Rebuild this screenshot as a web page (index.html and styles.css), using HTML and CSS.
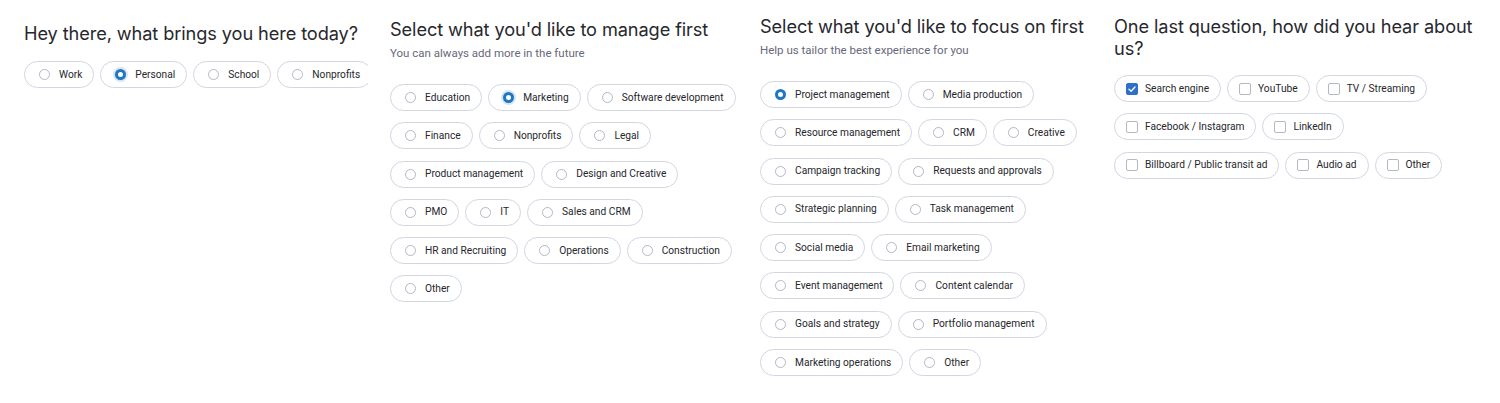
FILE: index.html
```html
<!DOCTYPE html>
<html>
<head>
<meta charset="utf-8">
<link rel="stylesheet" href="styles.css">
</head>
<body>
<div class="board">
  <section class="panel p1">
    <h2 class="title">Hey there, what brings you here today?</h2>
    <div class="rows">
      <div class="row nowrap">
        <div class="chip"><span class="radio"></span><span class="label">Work</span></div>
        <div class="chip"><span class="radio on halo"></span><span class="label">Personal</span></div>
        <div class="chip"><span class="radio"></span><span class="label">School</span></div>
        <div class="chip"><span class="radio"></span><span class="label">Nonprofits</span></div>
      </div>
    </div>
  </section>

  <section class="panel p2">
    <h2 class="title">Select what you'd like to manage first</h2>
    <p class="sub">You can always add more in the future</p>
    <div class="rows">
      <div class="row">
        <div class="chip"><span class="radio"></span><span class="label">Education</span></div>
        <div class="chip"><span class="radio on halo"></span><span class="label">Marketing</span></div>
        <div class="chip"><span class="radio"></span><span class="label">Software development</span></div>
      </div>
      <div class="row">
        <div class="chip"><span class="radio"></span><span class="label">Finance</span></div>
        <div class="chip"><span class="radio"></span><span class="label">Nonprofits</span></div>
        <div class="chip"><span class="radio"></span><span class="label">Legal</span></div>
      </div>
      <div class="row">
        <div class="chip"><span class="radio"></span><span class="label">Product management</span></div>
        <div class="chip"><span class="radio"></span><span class="label">Design and Creative</span></div>
      </div>
      <div class="row">
        <div class="chip"><span class="radio"></span><span class="label">PMO</span></div>
        <div class="chip"><span class="radio"></span><span class="label">IT</span></div>
        <div class="chip"><span class="radio"></span><span class="label">Sales and CRM</span></div>
      </div>
      <div class="row">
        <div class="chip"><span class="radio"></span><span class="label">HR and Recruiting</span></div>
        <div class="chip"><span class="radio"></span><span class="label">Operations</span></div>
        <div class="chip"><span class="radio"></span><span class="label">Construction</span></div>
      </div>
      <div class="row">
        <div class="chip"><span class="radio"></span><span class="label">Other</span></div>
      </div>
    </div>
  </section>

  <section class="panel p3">
    <h2 class="title">Select what you'd like to focus on first</h2>
    <p class="sub">Help us tailor the best experience for you</p>
    <div class="rows">
      <div class="row">
        <div class="chip"><span class="radio on"></span><span class="label">Project management</span></div>
        <div class="chip"><span class="radio"></span><span class="label">Media production</span></div>
      </div>
      <div class="row">
        <div class="chip"><span class="radio"></span><span class="label">Resource management</span></div>
        <div class="chip"><span class="radio"></span><span class="label">CRM</span></div>
        <div class="chip"><span class="radio"></span><span class="label">Creative</span></div>
      </div>
      <div class="row">
        <div class="chip"><span class="radio"></span><span class="label">Campaign tracking</span></div>
        <div class="chip"><span class="radio"></span><span class="label">Requests and approvals</span></div>
      </div>
      <div class="row">
        <div class="chip"><span class="radio"></span><span class="label">Strategic planning</span></div>
        <div class="chip"><span class="radio"></span><span class="label">Task management</span></div>
      </div>
      <div class="row">
        <div class="chip"><span class="radio"></span><span class="label">Social media</span></div>
        <div class="chip"><span class="radio"></span><span class="label">Email marketing</span></div>
      </div>
      <div class="row">
        <div class="chip"><span class="radio"></span><span class="label">Event management</span></div>
        <div class="chip"><span class="radio"></span><span class="label">Content calendar</span></div>
      </div>
      <div class="row">
        <div class="chip"><span class="radio"></span><span class="label">Goals and strategy</span></div>
        <div class="chip"><span class="radio"></span><span class="label">Portfolio management</span></div>
      </div>
      <div class="row">
        <div class="chip"><span class="radio"></span><span class="label">Marketing operations</span></div>
        <div class="chip"><span class="radio"></span><span class="label">Other</span></div>
      </div>
    </div>
  </section>

  <section class="panel p4">
    <h2 class="title wrap">One last question, how did you hear about us?</h2>
    <div class="rows">
      <div class="row">
        <div class="chip box"><span class="check on"><svg viewBox="0 0 12 12" width="12" height="12"><path d="M3 6.2 L5.1 8.2 L9 4" fill="none" stroke="#fff" stroke-width="1.3" stroke-linecap="round" stroke-linejoin="round"/></svg></span><span class="label">Search engine</span></div>
        <div class="chip box"><span class="check"></span><span class="label">YouTube</span></div>
        <div class="chip box"><span class="check"></span><span class="label">TV / Streaming</span></div>
      </div>
      <div class="row">
        <div class="chip box"><span class="check"></span><span class="label">Facebook / Instagram</span></div>
        <div class="chip box"><span class="check"></span><span class="label">LinkedIn</span></div>
      </div>
      <div class="row">
        <div class="chip box"><span class="check"></span><span class="label">Billboard / Public transit ad</span></div>
        <div class="chip box"><span class="check"></span><span class="label">Audio ad</span></div>
        <div class="chip box"><span class="check"></span><span class="label">Other</span></div>
      </div>
    </div>
  </section>
</div>
</body>
</html>
```

FILE: styles.css
```css
* { box-sizing: border-box; }
html, body { margin: 0; padding: 0; background: #ffffff; }
body {
  width: 1500px;
  height: 403px;
  overflow: hidden;
  font-family: Roboto, "Liberation Sans", sans-serif;
  color: #323338;
}
.board {
  display: grid;
  grid-template-columns: 344px 348px 332px 370px;
  column-gap: 22px;
  padding-left: 24px;
  align-items: start;
}
.panel { min-width: 0; }
.p1 { padding-top: 22px; overflow: hidden; }
.p2 { padding-top: 18px; }
.p3 { padding-top: 15px; }
.p4 { padding-top: 15px; }

.title {
  margin: 0;
  font-family: Inter, "Noto Sans", sans-serif;
  font-weight: 400;
  font-size: 18.2px;
  line-height: 22px;
  color: #27282d;
  letter-spacing: -0.1px;
  white-space: nowrap;
}
.title.wrap { white-space: normal; }
.p1 .title { margin-bottom: 17px; }
.p4 .title { margin-bottom: 16px; }
.sub {
  margin: 5px 0 23px;
  font-size: 11.5px;
  line-height: 16px;
  color: #676879;
}
.rows { display: flex; flex-direction: column; gap: 11.3px; }
.row { display: flex; gap: 6px; }
.row.nowrap { flex-wrap: nowrap; }
.chip {
  flex: none;
  display: flex;
  align-items: center;
  height: 27px;
  padding: 0 11px 0 14px;
  border: 1px solid #d3d5e2;
  border-radius: 14px;
  background: #fff;
  white-space: nowrap;
}
.chip.box { padding-left: 11px; }
.label {
  font-size: 10.2px;
  line-height: 14px;
  color: #26272c;
}
.radio {
  flex: none;
  width: 11px;
  height: 11px;
  margin-right: 9px;
  border: 1px solid #b4b7c5;
  border-radius: 50%;
  background: #fff;
}
.radio.on {
  border: 3.5px solid #1f76c2;
  background: #fff;
}
.radio.halo { box-shadow: 0 0 0 2px rgba(31, 118, 194, 0.18); }
.check {
  flex: none;
  width: 12px;
  height: 12px;
  margin-right: 7px;
  border: 1px solid #b4b7c5;
  border-radius: 2px;
  background: #fff;
  display: flex;
}
.check.on {
  border-color: #2e6fc8;
  background: #2e6fc8;
}
.check svg { display: block; margin: -1px; }
```
